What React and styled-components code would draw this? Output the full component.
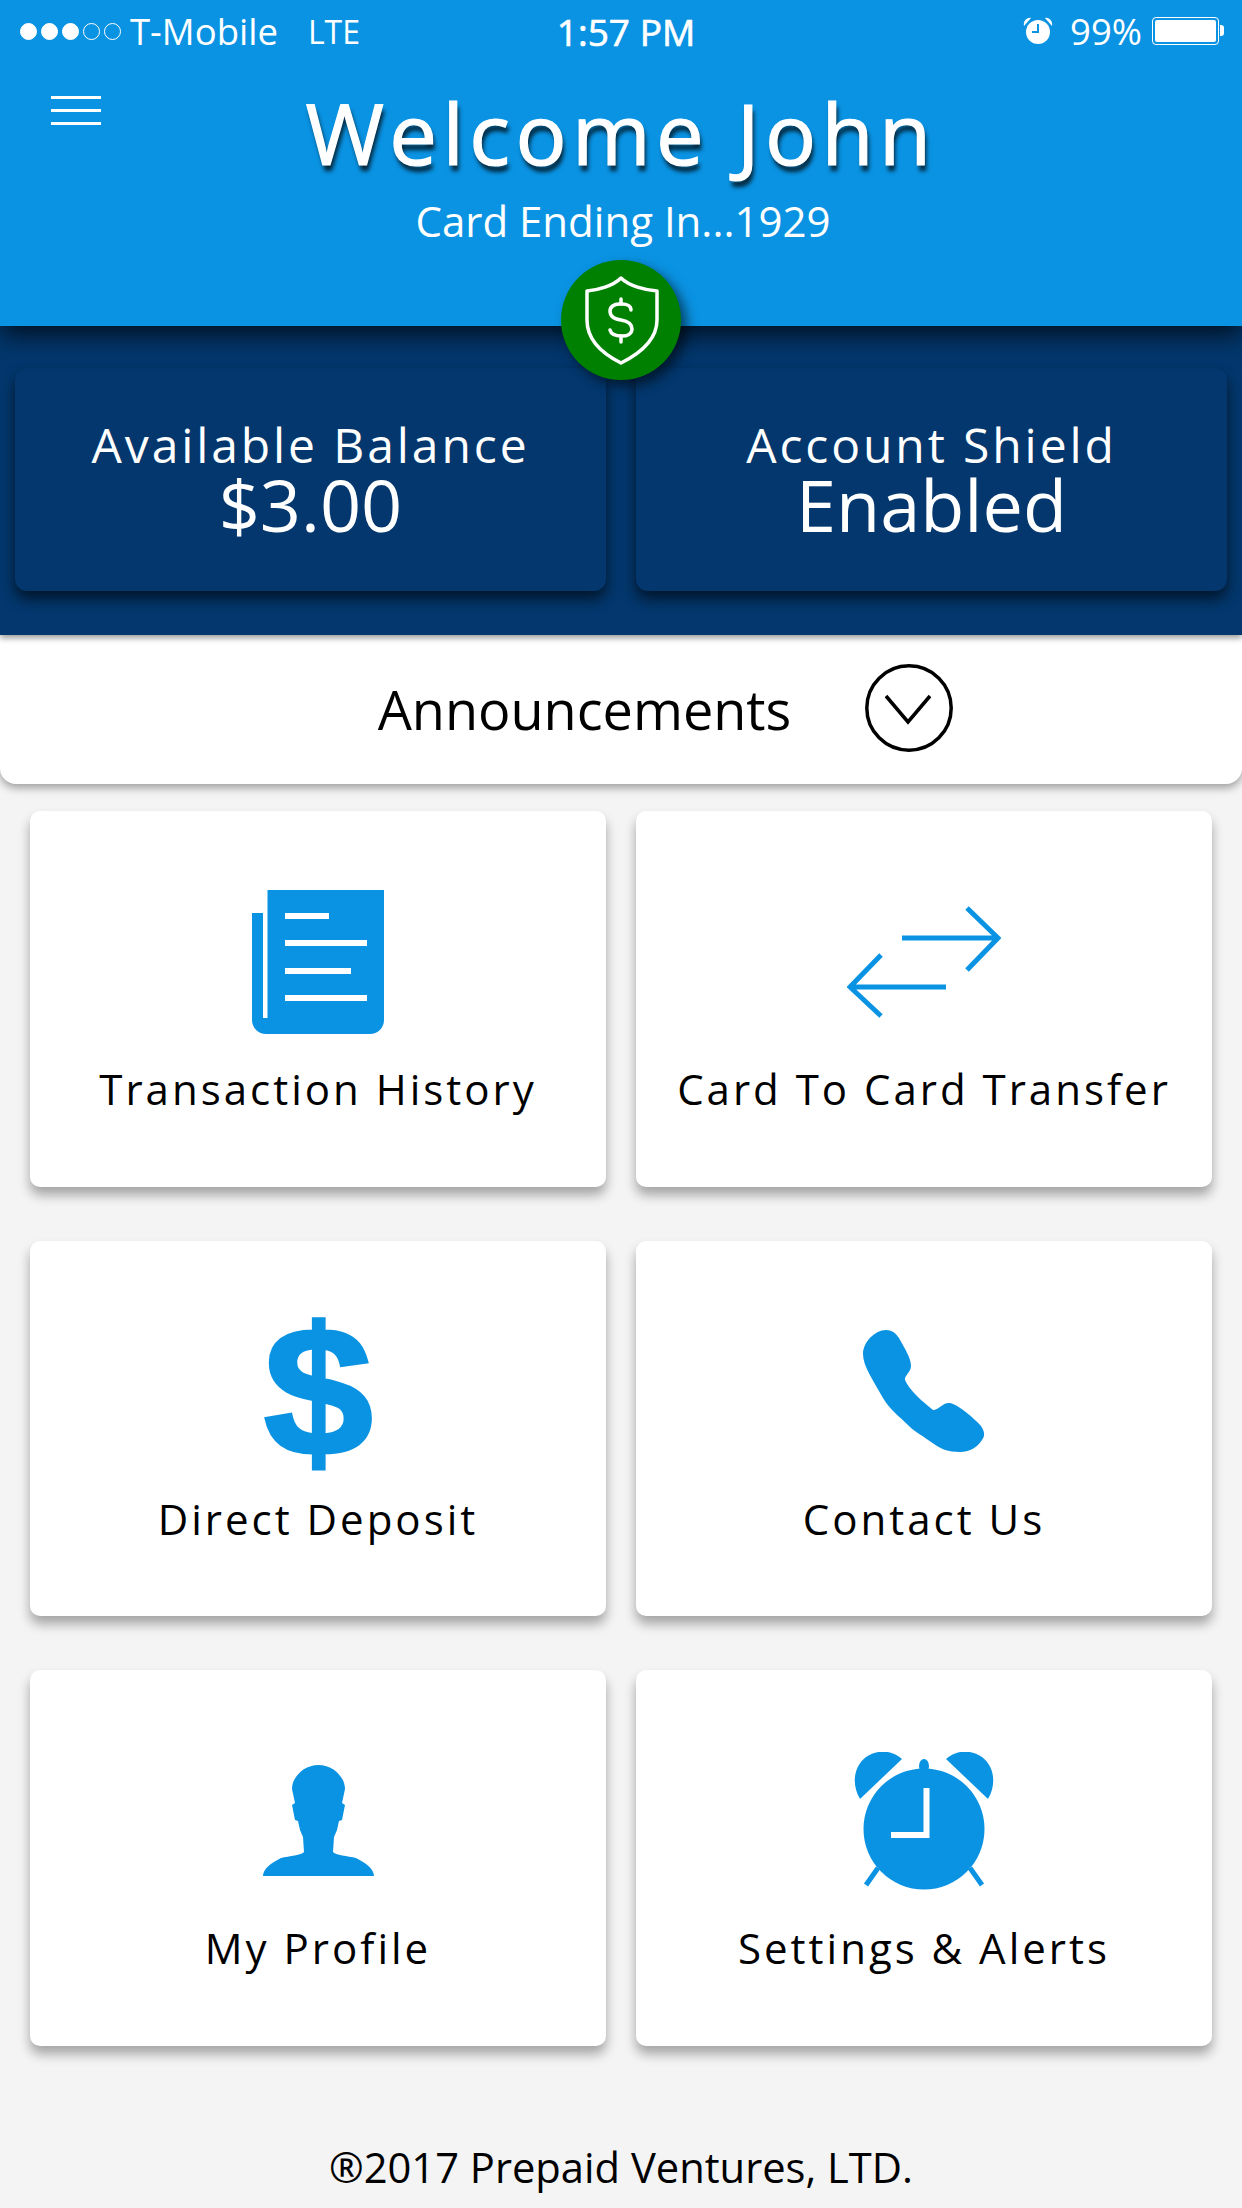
import React from 'react';
import styled, { createGlobalStyle } from 'styled-components';

const GlobalStyle = createGlobalStyle`
  html, body {
    margin: 0;
    padding: 0;
    background: #f4f4f4;
  }
  * { box-sizing: border-box; }
`;

const BLUE = '#0a93e3';

const Page = styled.div`
  width: 1242px;
  height: 2208px;
  overflow: hidden;
  background: #f4f4f4;
  font-family: 'Open Sans', sans-serif;
  display: flex;
  flex-direction: column;
`;

// Шапка
const Header = styled.header`
  position: relative;
  z-index: 3;
  height: 326px;
  background: ${BLUE};
  color: #fff;
  box-shadow: 0 8px 24px rgba(0, 0, 0, 0.75);
`;

const StatusBar = styled.div`
  height: 62px;
  display: grid;
  grid-template-columns: 1fr auto 1fr;
  align-items: center;
  padding: 0 16px 0 20px;
  font-size: 36.5px;
`;

const StatusLeft = styled.div`
  display: flex;
  align-items: center;
`;

const SignalDots = styled.div`
  display: flex;
  gap: 4px;
  margin-right: 9px;
`;

const SignalDot = styled.span`
  width: 17px;
  height: 17px;
  border-radius: 50%;
  border: 1.5px solid #fff;
  background: ${props => props.$on ? '#fff' : 'transparent'};
`;

const Carrier = styled.span`
  margin-right: 30px;
`;

const NetworkType = styled.span`
  font-size: 32px;
`;

const StatusTime = styled.div`
  font-size: 37px;
  -webkit-text-stroke: 0.7px #fff;
  padding-left: 6px;
`;

const StatusRight = styled.div`
  display: flex;
  align-items: center;
  justify-content: flex-end;
`;

const BatteryPercent = styled.span`
  margin-left: 16px;
`;

const Battery = styled.div`
  position: relative;
  width: 67px;
  height: 28px;
  margin-left: 10px;
  margin-right: 7px;
  padding: 2px;
  border: 1.5px solid #fff;
  border-radius: 4px;
  &::after {
    content: '';
    position: absolute;
    top: 7px;
    right: -6px;
    width: 4px;
    height: 11px;
    border-radius: 0 3px 3px 0;
    background: #fff;
  }
`;

const BatteryFill = styled.div`
  width: 100%;
  height: 100%;
  background: #fff;
  border-radius: 2px;
`;

const HeaderMain = styled.div`
  display: grid;
  grid-template-columns: 1fr auto 1fr;
`;

const MenuButton = styled.div`
  display: flex;
  flex-direction: column;
  gap: 10px;
  width: 50px;
  margin: 34px 0 0 51px;
`;

const MenuLine = styled.span`
  height: 3px;
  background: #fff;
`;

const Titles = styled.div`
  display: flex;
  flex-direction: column;
  align-items: center;
`;

const Title = styled.h1`
  margin: 14px 0 0;
  font-size: 85px;
  line-height: 112px;
  font-weight: 400;
  letter-spacing: 5.4px;
  -webkit-text-stroke: 1.2px #fff;
  text-shadow: 2px 6px 4px rgba(0, 0, 0, 0.75);
`;

const CardEnding = styled.div`
  font-size: 42px;
  line-height: 56px;
  margin-top: 5px;
  padding-left: 4px;
`;

const Badge = styled.div`
  position: absolute;
  left: 561px;
  top: 260px;
  width: 120px;
  height: 120px;
  border-radius: 50%;
  background: #008000;
  box-shadow: 6px 6px 12px rgba(0, 0, 0, 0.55);
  display: flex;
`;

// Тёмный блок с балансом
const BalanceSection = styled.section`
  position: relative;
  z-index: 2;
  height: 309px;
  background: #03376d;
  padding: 42px 15px 44px;
  display: grid;
  grid-template-columns: 1fr 1fr;
  gap: 30px;
  box-shadow: 0 3px 6px rgba(0, 0, 0, 0.4);
`;

const BalanceCard = styled.div`
  border-radius: 12px;
  background: #03376d;
  box-shadow: 0 8px 14px rgba(0, 0, 0, 0.6);
  color: #fff;
  display: flex;
  flex-direction: column;
  align-items: center;
  justify-content: center;
  padding-bottom: 8px;
`;

const BalanceLabel = styled.div`
  font-size: 48px;
  line-height: 56px;
  letter-spacing: 2.9px;
`;

const BalanceValue = styled.div`
  font-size: 72px;
  line-height: 62px;
`;

const Announcements = styled.div`
  position: relative;
  z-index: 1;
  height: 149px;
  background: #fff;
  border-radius: 0 0 16px 16px;
  box-shadow: 0 4px 8px rgba(0, 0, 0, 0.35);
  display: flex;
  align-items: center;
  justify-content: center;
  gap: 74px;
  padding-left: 89px;
  padding-bottom: 4px;
`;

const AnnouncementsText = styled.div`
  font-size: 54px;
  line-height: 74px;
  color: #000;
  padding-top: 2px;
`;

const MenuGrid = styled.div`
  padding: 27px 30px 0;
  display: grid;
  grid-template-columns: 1fr 1fr;
  grid-auto-rows: 375.5px;
  row-gap: 54px;
  column-gap: 30px;
`;

const MenuCard = styled.div`
  background: #fff;
  border-radius: 10px;
  box-shadow: 0 8px 12px rgba(0, 0, 0, 0.33);
  padding-top: 52px;
  display: flex;
  flex-direction: column;
  align-items: center;
`;

const IconSlot = styled.div`
  height: 197px;
  display: flex;
  align-items: center;
  justify-content: center;
  color: ${BLUE};
`;

const DollarGlyph = styled.span`
  font-family: 'Liberation Sans', sans-serif;
  font-weight: 700;
  font-size: 184px;
  line-height: 197px;
  color: ${BLUE};
  -webkit-text-stroke: 3px ${BLUE};
  transform: scaleX(1.07);
`;

const MenuLabel = styled.div`
  font-size: 42px;
  line-height: 58px;
  letter-spacing: 3px;
  color: #000;
`;

const Footer = styled.footer`
  flex: 1;
  display: flex;
  align-items: center;
  justify-content: center;
  padding-top: 80px;
  font-size: 41.7px;
  color: #000;
`;

// Иконки
const ShieldIcon = () => (
  <svg width="120" height="120" viewBox="0 0 120 120" fill="none" stroke="#fff" strokeWidth="3.5" strokeLinecap="round" strokeLinejoin="round">
    <path d="M60 18C68 26 84 30 96 31V60C96 80 78 94 60 103C42 94 26 80 26 60V31C37 30 52 26 60 18Z" />
    <path d="M70 50C70 46 66 44 61 44H58C53 44 49 47 49 51C49 56 53 59 60 60C66 61 71 64 71 69C71 74 66 76 61 76C55 76 50 74 49 70" />
    <path d="M60 39V44M60 76V82" />
  </svg>
);

const ChevronCircle = () => (
  <svg width="88" height="88" viewBox="0 0 88 88" fill="none" stroke="#000" strokeWidth="3.5">
    <circle cx="44" cy="44" r="42.2" />
    <path d="M21 32L43 58L65 32" />
  </svg>
);

const StatusAlarm = () => (
  <svg width="32" height="30" viewBox="0 0 32 28" fill="#fff">
    <circle cx="16" cy="15" r="12" />
    <path d="M2 9C1 4 5 0 9 1ZM30 9C31 4 27 0 23 1Z" />
    <path d="M16 7V15H10" fill="none" stroke="#0a93e3" strokeWidth="2" />
  </svg>
);

const NewspaperIcon = () => (
  <svg width="132" height="144" viewBox="0 0 132 144" fill="currentColor">
    <path d="M15.5 0H132V130A14 14 0 0 1 118 144H14A14 14 0 0 1 0 130V23H11V128H15.5Z" />
    <g fill="#fff">
      <rect x="33" y="23" width="44" height="6" />
      <rect x="33" y="50" width="82" height="6" />
      <rect x="33" y="78" width="66" height="6" />
      <rect x="33" y="105" width="82" height="6" />
    </g>
  </svg>
);

const TransferIcon = () => (
  <svg width="154" height="112" viewBox="0 0 154 112" fill="none" stroke="currentColor" strokeWidth="5">
    <path d="M55 32H150M120 2L151 32L120 64" />
    <path d="M99 81H4M34 49L3 81L34 110" />
  </svg>
);

const PhoneIcon = () => (
  <svg width="122" height="122" viewBox="0 0 122 122" fill="currentColor">
    <path d="M23 0C30 0 33 4 36 8C42 19 48 28 48 36C48 42 41 46 42 50C46 60 60 72 70 80C76 80 80 72 87 73C96 75 113 90 118 96C122 102 122 106 119 110C114 118 106 122 97 122C85 122 78 119 71 114C60 106 52 102 46 96C36 86 27 80 20 68C10 50 0 36 0 24C0 12 12 0 23 0Z" />
  </svg>
);

const ProfileIcon = () => (
  <svg width="111" height="111" viewBox="0 0 111 111" fill="currentColor">
    <path d="M55.5 0C70 0 82 12 82 24L79 38L82 40L79 55L76 56L74 65L71 72L70 87C72 90 85 91 93 93C103 98 111 104 111 111H0C0 104 8 98 18 93C26 91 39 90 41 87L40 72L37 65L35 56L32 55L29 40L32 38L29 24C29 12 41 0 55.5 0Z" />
  </svg>
);

const AlarmIcon = () => (
  <svg width="140" height="138" viewBox="0 0 140 138" fill="currentColor">
    <path d="M48 7C38 -2 24 -3 12 5C0 14 -3 32 6 47Z" />
    <path d="M92 7C102 -2 116 -3 128 5C140 14 143 32 134 47Z" />
    <circle cx="70" cy="77" r="63" fill="#fff" />
    <circle cx="70" cy="77" r="60.5" />
    <ellipse cx="70" cy="14" rx="5" ry="7" />
    <path d="M24 116L12 133M116 116L128 133" fill="none" stroke="currentColor" strokeWidth="5" />
    <path d="M72.5 36V83H37" fill="none" stroke="#fff" strokeWidth="6" />
  </svg>
);

const menuItems = [
  { label: 'Transaction History', icon: <NewspaperIcon /> },
  { label: 'Card To Card Transfer', icon: <TransferIcon /> },
  { label: 'Direct Deposit', icon: <DollarGlyph>$</DollarGlyph> },
  { label: 'Contact Us', icon: <PhoneIcon /> },
  { label: 'My Profile', icon: <ProfileIcon /> },
  { label: 'Settings & Alerts', icon: <AlarmIcon /> },
];

function App() {
  return (
    <Page>
      <GlobalStyle />
      <Header>
        <StatusBar>
          <StatusLeft>
            <SignalDots>
              {[true, true, true, false, false].map((on, index) => (
                <SignalDot key={index} $on={on} />
              ))}
            </SignalDots>
            <Carrier>T-Mobile</Carrier>
            <NetworkType>LTE</NetworkType>
          </StatusLeft>
          <StatusTime>1:57 PM</StatusTime>
          <StatusRight>
            <StatusAlarm />
            <BatteryPercent>99%</BatteryPercent>
            <Battery><BatteryFill /></Battery>
          </StatusRight>
        </StatusBar>
        <HeaderMain>
          <MenuButton>
            <MenuLine />
            <MenuLine />
            <MenuLine />
          </MenuButton>
          <Titles>
            <Title>Welcome John</Title>
            <CardEnding>Card Ending In...1929</CardEnding>
          </Titles>
        </HeaderMain>
        <Badge><ShieldIcon /></Badge>
      </Header>

      <BalanceSection>
        <BalanceCard>
          <BalanceLabel>Available Balance</BalanceLabel>
          <BalanceValue>$3.00</BalanceValue>
        </BalanceCard>
        <BalanceCard>
          <BalanceLabel>Account Shield</BalanceLabel>
          <BalanceValue>Enabled</BalanceValue>
        </BalanceCard>
      </BalanceSection>

      <Announcements>
        <AnnouncementsText>Announcements</AnnouncementsText>
        <ChevronCircle />
      </Announcements>

      <MenuGrid>
        {menuItems.map(item => (
          <MenuCard key={item.label}>
            <IconSlot>{item.icon}</IconSlot>
            <MenuLabel>{item.label}</MenuLabel>
          </MenuCard>
        ))}
      </MenuGrid>

      <Footer>®2017 Prepaid Ventures, LTD.</Footer>
    </Page>
  );
}

export default App;
